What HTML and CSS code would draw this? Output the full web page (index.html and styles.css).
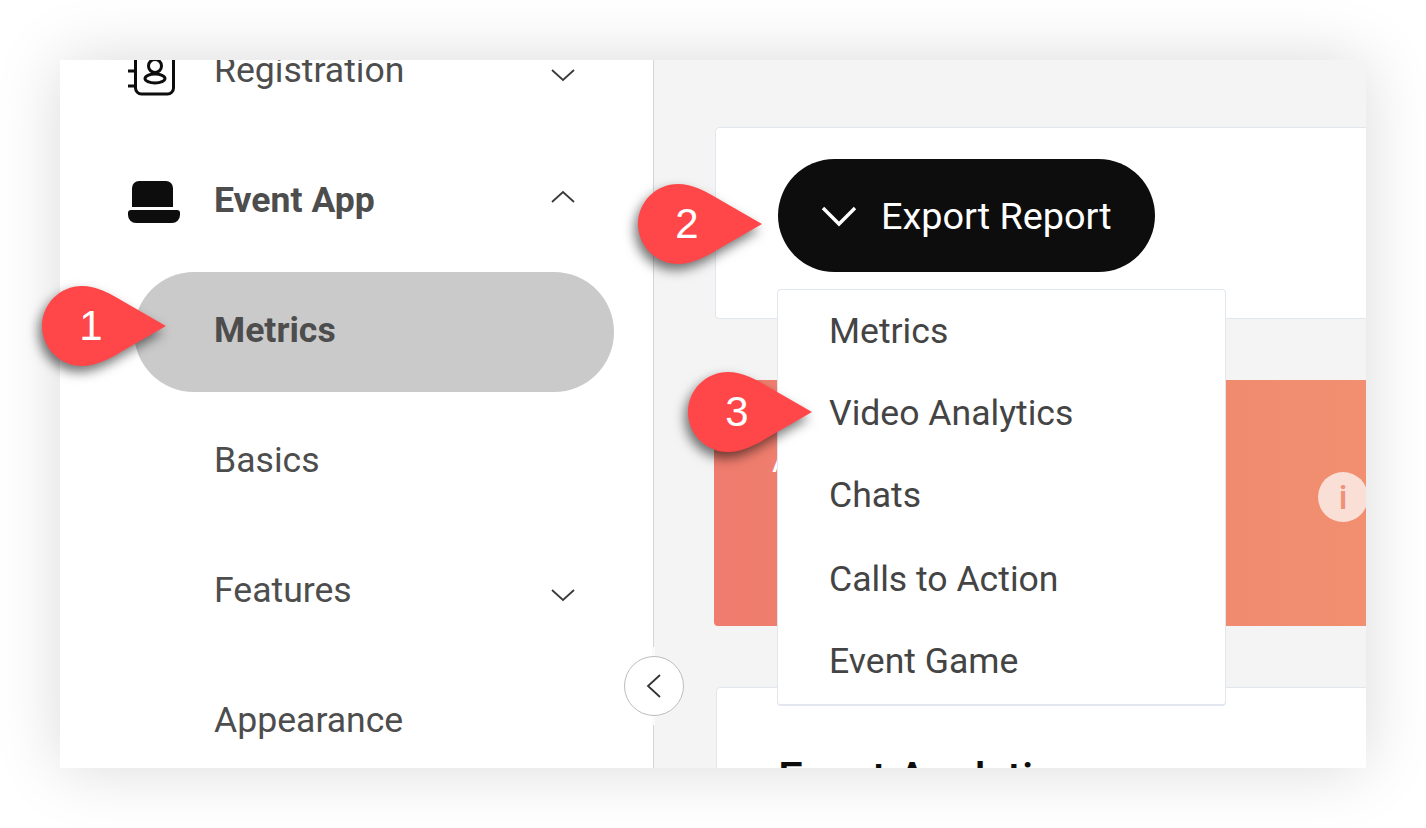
FILE: index.html
```html
<!DOCTYPE html>
<html lang="en">
<head>
<meta charset="utf-8">
<title>Export Report</title>
<link rel="stylesheet" href="styles.css">
</head>
<body>
<div class="frame">
  <aside class="sidebar">
    <nav class="nav">
      <div class="row">
        <svg class="icon reg" width="52" height="52" viewBox="0 0 52 52" fill="none" stroke="#0d0d0d" stroke-width="3">
          <rect x="7.5" y="1" width="38" height="46" rx="6"/>
          <path d="M0 24h7M0 39h7"/>
          <circle cx="27" cy="19" r="6.5"/>
          <ellipse cx="27" cy="31.5" rx="10" ry="4.5"/>
        </svg>
        <span class="label">Registration</span>
        <svg class="chev" width="26" height="14" viewBox="0 0 26 14"><path d="M2 2l11 10L24 2"/></svg>
      </div>
      <div class="row">
        <svg class="icon app" width="52" height="42" viewBox="0 0 52 42" fill="#0d0d0d">
          <path d="M4 7a7 7 0 0 1 7-7h27a7 7 0 0 1 7 7v19H4z"/>
          <path d="M3 29h46a3 3 0 0 1 3 3v2a8 8 0 0 1-8 8H8a8 8 0 0 1-8-8v-2a3 3 0 0 1 3-3z"/>
        </svg>
        <span class="label bold">Event App</span>
        <svg class="chev up" width="26" height="14" viewBox="0 0 26 14"><path d="M2 12L13 2l11 10"/></svg>
      </div>
      <div class="row sub active"><span class="label bold">Metrics</span></div>
      <div class="row sub"><span class="label">Basics</span></div>
      <div class="row sub">
        <span class="label">Features</span>
        <svg class="chev" width="26" height="14" viewBox="0 0 26 14"><path d="M2 2l11 10L24 2"/></svg>
      </div>
      <div class="row sub"><span class="label">Appearance</span></div>
    </nav>
    <button class="collapse" type="button" aria-label="Collapse">
      <svg width="18" height="26" viewBox="0 0 18 26"><path d="M15 2L3 13l12 11"/></svg>
    </button>
  </aside>
  <main class="main">
    <section class="card top">
      <div class="export">
        <button class="btn" type="button">
          <svg width="38" height="22" viewBox="0 0 38 22"><path d="M3 3l16 16L35 3"/></svg>
          <span>Export Report</span>
        </button>
        <ul class="menu">
          <li>Metrics</li>
          <li>Video Analytics</li>
          <li>Chats</li>
          <li>Calls to Action</li>
          <li>Event Game</li>
        </ul>
      </div>
    </section>
    <section class="banner">
      <span class="banner-text">A</span>
      <span class="info">i</span>
    </section>
    <section class="card bottom">
      <h2 class="heading">Event Analytics</h2>
    </section>
  </main>
</div>

<div class="pin pin-1">
  <svg width="124" height="80" viewBox="0 0 124 80"><path d="M40 0C54 0 68 7 84 17L124 40 84 63C68 73 54 80 40 80 18 80 0 62 0 40S18 0 40 0Z"/></svg>
  <span>1</span>
</div>
<div class="pin pin-2">
  <svg width="124" height="80" viewBox="0 0 124 80"><path d="M40 0C54 0 68 7 84 17L124 40 84 63C68 73 54 80 40 80 18 80 0 62 0 40S18 0 40 0Z"/></svg>
  <span>2</span>
</div>
<div class="pin pin-3">
  <svg width="124" height="80" viewBox="0 0 124 80"><path d="M40 0C54 0 68 7 84 17L124 40 84 63C68 73 54 80 40 80 18 80 0 62 0 40S18 0 40 0Z"/></svg>
  <span>3</span>
</div>
</body>
</html>
```

FILE: styles.css
```css
* { box-sizing: border-box; }
html, body { margin: 0; height: 100%; background: #fff; overflow: hidden; }
body {
  position: relative;
  padding: 60px;
  font-family: Roboto, "Liberation Sans", sans-serif;
}
.frame {
  display: flex;
  width: 1306px;
  height: 708px;
  overflow: hidden;
  background: #f4f4f4;
  box-shadow: 0 0 62px rgba(0, 0, 0, .15);
}
.sidebar {
  position: relative;
  flex: 0 0 594px;
  background: #fff;
  border-right: 1px solid #d6d6d6;
}
.nav {
  display: flex;
  flex-direction: column;
  gap: 10px;
  margin-top: -48px;
}
.row {
  display: flex;
  align-items: center;
  height: 120px;
  padding: 0 77px 4px 68px;
  color: #4d4d4d;
  font-size: 35.6px;
}
.icon { flex: 0 0 52px; margin-right: 34px; }
.icon.reg { margin-top: 6px; }
.icon.app { margin-top: 4px; }
.label { line-height: 40px; }
.bold { font-weight: 700; }
.chev { margin-left: auto; fill: none; stroke: #3a3a3a; stroke-width: 1.8; }
.row:first-child .chev { margin-top: 10px; }
.chev.up { margin-top: -6px; }
.sub { margin-left: 74px; padding-left: 80px; padding-right: 38px; width: 480px; border-radius: 60px; }
.sub .chev { margin-top: 10px; }
.active { background: #cacaca; }
.collapse {
  position: absolute;
  left: 564px;
  top: 596px;
  display: flex;
  align-items: center;
  justify-content: center;
  width: 60px;
  height: 60px;
  padding: 0;
  background: #fff;
  border: 1px solid #bdbdbd;
  border-radius: 50%;
}
.collapse::before,
.collapse::after {
  content: "";
  position: absolute;
  left: 27px;
  width: 3px;
  height: 9px;
  background: #fafafa;
}
.collapse::before { top: -10px; }
.collapse::after { bottom: -10px; }
.collapse svg { fill: none; stroke: #333; stroke-width: 1.8; }
.main {
  flex: 1;
  min-width: 0;
  overflow: hidden;
  display: flex;
  flex-direction: column;
  gap: 61px;
  padding: 67px 0 0 61px;
}
.card {
  flex: none;
  width: 800px;
  background: #fff;
  border: 1px solid #e2e7ef;
  border-radius: 4px;
}
.top { height: 192px; padding: 31px 0 0 62px; }
.export { position: relative; width: 377px; }
.btn {
  display: flex;
  align-items: center;
  gap: 23px;
  width: 377px;
  height: 113px;
  padding: 0 0 0 42px;
  background: #0d0d0d;
  color: #fff;
  border: 0;
  border-radius: 57px;
  font: 400 37.8px Roboto, "Liberation Sans", sans-serif;
}
.btn svg { fill: none; stroke: #fff; stroke-width: 3.4; }
.menu {
  position: absolute;
  z-index: 2;
  top: 130px;
  left: -1px;
  width: 449px;
  height: 417px;
  margin: 0;
  padding: 0 0 0 51px;
  list-style: none;
  background: #fff;
  border: 1px solid #e2e7ef;
  border-bottom-width: 2px;
  border-radius: 4px;
  color: #444;
  font-size: 35.6px;
}
.menu li { display: flex; align-items: center; height: 82px; }
.menu li:nth-child(4) { margin-top: 2px; }
.banner {
  flex: none;
  display: flex;
  align-items: center;
  justify-content: space-between;
  width: 653px;
  height: 246px;
  margin-left: -1px;
  padding: 0 0 0 58px;
  background: linear-gradient(90deg, #ef7c6e, #f18f70);
  border-radius: 4px 0 0 4px;
  color: #fff;
  font-size: 34px;
}
.banner-text { margin-bottom: 86px; }
.info {
  display: flex;
  align-items: center;
  justify-content: center;
  flex: none;
  width: 50px;
  height: 50px;
  margin: 0 -1px 12px 0;
  border-radius: 50%;
  background: #fadfd7;
  color: #ee9279;
  font-weight: 500;
  font-size: 34px;
}
.bottom { height: 200px; padding: 67px 0 0 61px; margin-left: 1px; }
.heading {
  margin: 0;
  font-size: 44px;
  font-weight: 500;
  line-height: 48px;
  white-space: nowrap;
  color: #0d0d0d;
}
.pin {
  position: absolute;
  z-index: 3;
  width: 124px;
  height: 80px;
}
.pin svg {
  display: block;
  overflow: visible;
  fill: #ff4648;
  filter: drop-shadow(-3px 6px 6px rgba(0, 0, 0, .55));
}
.pin span {
  position: absolute;
  left: 24px;
  top: 0;
  width: 50px;
  text-align: center;
  line-height: 80px;
  color: #fff;
  font-family: "Liberation Sans", sans-serif;
  font-size: 42px;
}
.pin-1 { left: 42px; top: 286px; }
.pin-2 { left: 638px; top: 184px; }
.pin-3 { left: 688px; top: 372px; }
```
